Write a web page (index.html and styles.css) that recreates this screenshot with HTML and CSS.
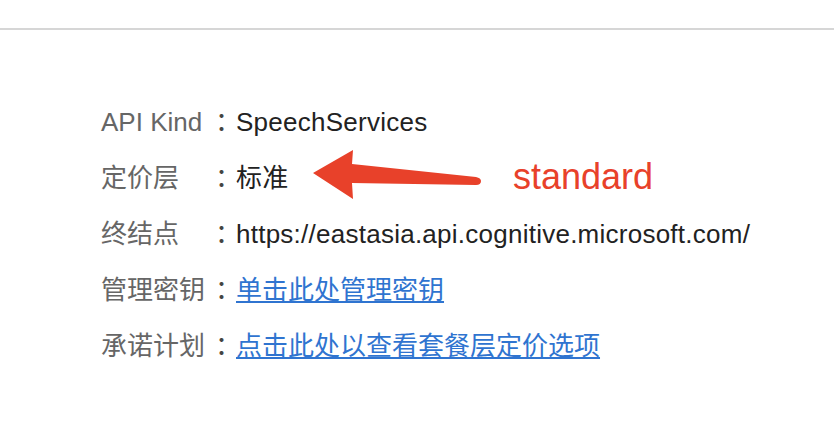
FILE: index.html
```html
<!DOCTYPE html>
<html lang="zh-CN">
<head>
  <meta charset="UTF-8">
  <meta name="viewport" content="width=device-width, initial-scale=1.0">
  <title>API 属性</title>
  <link rel="stylesheet" href="styles.css">
</head>
<body>
  <div class="topbar"></div>

  <div class="content">
    <div class="props">
      <div class="label">API Kind</div>
      <div class="colon">：</div>
      <div class="value">SpeechServices</div>

      <div class="label">定价层</div>
      <div class="colon">：</div>
      <div class="value">标准</div>

      <div class="label">终结点</div>
      <div class="colon">：</div>
      <div class="value">https://eastasia.api.cognitive.microsoft.com/</div>

      <div class="label">管理密钥</div>
      <div class="colon">：</div>
      <div class="value"><a href="#">单击此处管理密钥</a></div>

      <div class="label">承诺计划</div>
      <div class="colon">：</div>
      <div class="value"><a href="#">点击此处以查看套餐层定价选项</a></div>
    </div>

    <!-- annotation drawn over the screenshot -->
    <svg class="arrow" width="180" height="60" viewBox="0 0 180 60">
      <path d="M0 23 L40 0 L39 14 L163 27 Q168 28 168 31 Q168 35 163 35 L39 33 L40 49 Z" fill="#e8412a"/>
    </svg>
    <div class="note">standard</div>
  </div>
</body>
</html>
```

FILE: styles.css
```css
body {
  margin: 0;
  background: #fff;
  font-family: "Liberation Sans", "Noto Sans CJK SC", sans-serif;
}

.topbar {
  height: 28px;
  border-bottom: 2px solid #d6d6d6;
}

.content {
  position: relative;
  padding: 64px 0 0 101px;
}

.props {
  display: grid;
  grid-template-columns: 107px 28px auto;
  font-size: 26px;
  line-height: 56px;
}

.label {
  color: #666;
}

.colon {
  color: #444;
  padding-left: 7px;
  font-feature-settings: "halt";
}

.value {
  color: #222;
  letter-spacing: 0.25px;
}

.value a {
  color: #2f74d0;
  text-decoration: underline;
  letter-spacing: 0;
}

.arrow {
  position: absolute;
  left: 313px;
  top: 120px;
}

.note {
  position: absolute;
  left: 513px;
  top: 127px;
  font-size: 36px;
  line-height: 40px;
  color: #e8412a;
}
```
